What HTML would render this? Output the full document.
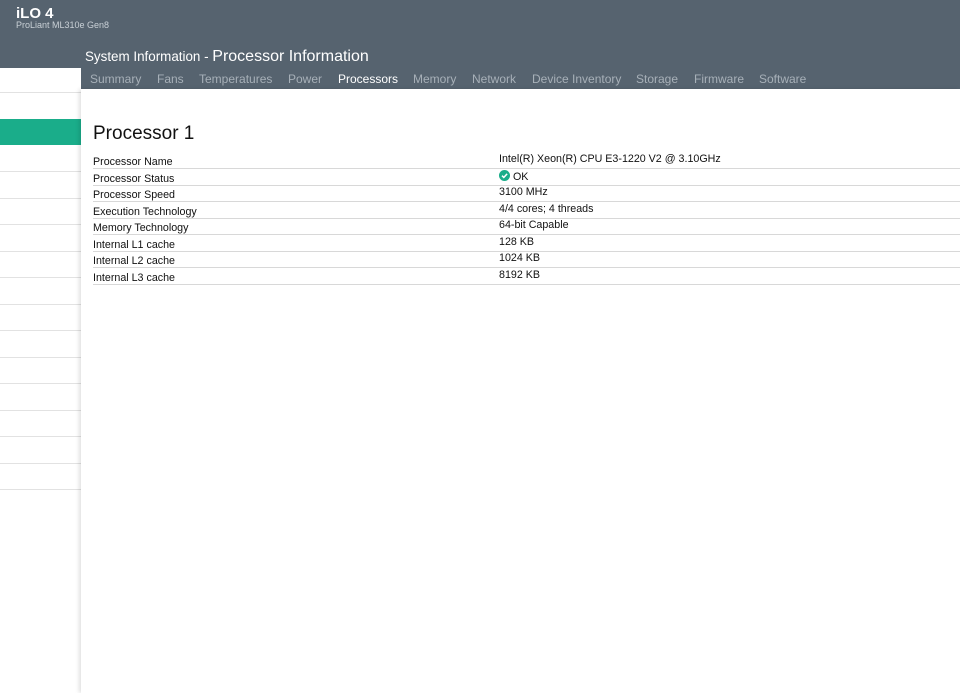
<!DOCTYPE html>
<html><head><style>
body{margin:0;width:960px;height:693px;overflow:hidden;background:#fff;font-family:"Liberation Sans",sans-serif;position:relative}
.hdr{position:absolute;left:0;top:0;width:960px;height:89px;background:#56636f}
.a{position:absolute;white-space:nowrap}
.side{position:absolute;left:0;top:68px;width:81px;height:625px;background:#fff}
.sl{position:absolute;left:0;width:81px;height:1px;background:#e2e2e2}
.main{position:absolute;left:81px;top:89px;width:879px;height:604px;background:#fff;box-shadow:-2px 0 4px rgba(0,0,0,.12)}
.tab{position:absolute;top:72px;font-size:12px;color:#a7b0b8}
.row{position:absolute;left:93px;width:867px;height:16px;border-bottom:1px solid #d8d8d8;font-size:10.7px;color:#111}
.row span{position:absolute;top:3px}
</style></head><body>
<div class="hdr"></div>
<div class="a" style="left:16px;top:5px;font-size:15px;font-weight:bold;color:#fff">iLO 4</div>
<div class="a" style="left:16px;top:20px;font-size:9px;color:#c9d0d6">ProLiant ML310e Gen8</div>
<div class="a" style="left:85px;top:48px;font-size:13.4px;color:#fff">System Information - <span style="font-size:16px">Processor Information</span></div>
<div class="side">
<div class="sl" style="top:24px"></div>
<div style="position:absolute;left:0;top:51px;width:81px;height:26px;background:#1aad8a"></div>
<div class="sl" style="top:103px"></div><div class="sl" style="top:130px"></div><div class="sl" style="top:156px"></div><div class="sl" style="top:183px"></div><div class="sl" style="top:209px"></div><div class="sl" style="top:236px"></div><div class="sl" style="top:262px"></div><div class="sl" style="top:289px"></div><div class="sl" style="top:315px"></div><div class="sl" style="top:342px"></div><div class="sl" style="top:368px"></div><div class="sl" style="top:395px"></div><div class="sl" style="top:421px"></div>
</div>
<div class="main"></div>
<div class="tab" style="left:90px">Summary</div>
<div class="tab" style="left:157px">Fans</div>
<div class="tab" style="left:199px">Temperatures</div>
<div class="tab" style="left:288px">Power</div>
<div class="tab" style="left:338px;color:#fff">Processors</div>
<div class="tab" style="left:413px">Memory</div>
<div class="tab" style="left:472px">Network</div>
<div class="tab" style="left:532px">Device Inventory</div>
<div class="tab" style="left:636px">Storage</div>
<div class="tab" style="left:694px">Firmware</div>
<div class="tab" style="left:759px">Software</div>
<div class="a" style="left:93px;top:123px;font-size:19px;color:#111">Processor 1</div>
<div class="row" style="top:152px"><span style="left:0;top:4px">Processor Name</span><span style="left:406px;top:1px">Intel(R) Xeon(R) CPU E3-1220 V2 @ 3.10GHz</span></div>
<div class="row" style="top:169px"><span style="left:0;top:4px">Processor Status</span><span style="left:406px;top:1px"><svg width="11" height="11" viewBox="0 0 11 11" style="vertical-align:-1px"><circle cx="5.5" cy="5.5" r="5.5" fill="#1aad8a"/><path d="M3 5.7l1.8 1.7 3.3-3.5" stroke="#fff" stroke-width="1.5" fill="none"/></svg> OK</span></div>
<div class="row" style="top:185px"><span style="left:0;top:4px">Processor Speed</span><span style="left:406px;top:1px">3100 MHz</span></div>
<div class="row" style="top:202px"><span style="left:0;top:4px">Execution Technology</span><span style="left:406px;top:1px">4/4 cores; 4 threads</span></div>
<div class="row" style="top:218px"><span style="left:0;top:4px">Memory Technology</span><span style="left:406px;top:1px">64-bit Capable</span></div>
<div class="row" style="top:235px"><span style="left:0;top:4px">Internal L1 cache</span><span style="left:406px;top:1px">128 KB</span></div>
<div class="row" style="top:251px"><span style="left:0;top:4px">Internal L2 cache</span><span style="left:406px;top:1px">1024 KB</span></div>
<div class="row" style="top:268px"><span style="left:0;top:4px">Internal L3 cache</span><span style="left:406px;top:1px">8192 KB</span></div>
</body></html>
